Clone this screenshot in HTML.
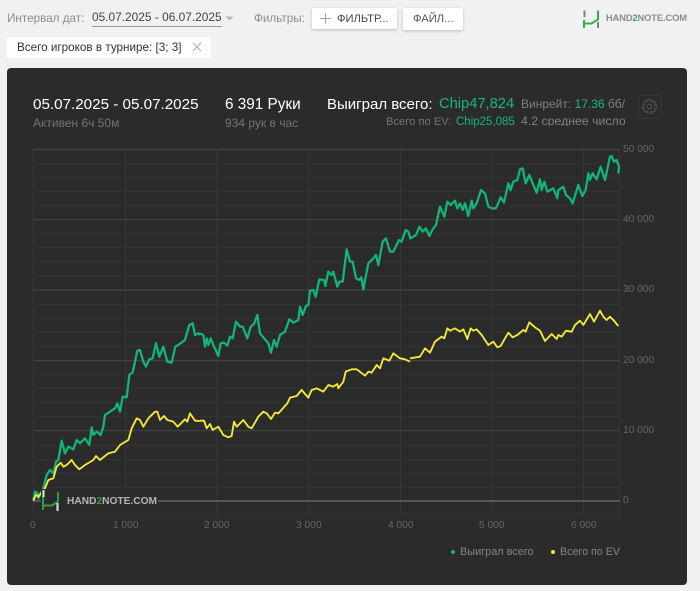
<!DOCTYPE html>
<html><head><meta charset="utf-8"><style>
html,body{margin:0;padding:0}
body{width:700px;height:591px;background:#f1f1f1;position:relative;overflow:hidden;font-family:"Liberation Sans",Arial,sans-serif}
.t{position:absolute;white-space:nowrap;line-height:1;transform-origin:0 50%}
.btn{position:absolute;background:#fff;border-radius:2px;box-shadow:0 1px 3px rgba(0,0,0,.22)}
#panel{position:absolute;left:7px;top:68px;width:680px;height:517px;background:#2b2b2b;border-radius:4px}
.ax{font-size:10.2px;color:#656565}
.g{color:#14b878}
</style></head><body>
<div class="t" style="left:7px;top:13px;font-size:11.7px;color:#8b8b8b">Интервал дат:</div>
<div class="t" style="left:92px;top:12px;font-size:11.9px;color:#444;border-bottom:1px solid #999;padding-bottom:2px">05.07.2025 - 06.07.2025</div>
<svg style="position:absolute;left:225px;top:16px" width="10" height="6"><path d="M0.5 0.5H8.5L4.5 4.500Z" fill="#b5b5b5"/></svg>
<div class="t" style="left:254px;top:13px;font-size:11.7px;color:#8b8b8b">Фильтры:</div>
<div class="btn" style="left:312px;top:8px;width:85px;height:21px"></div>
<svg style="position:absolute;left:320px;top:13px" width="11" height="11"><path d="M5.500 0V11M0 5.500H11" stroke="#aaa" stroke-width="1.200"/></svg>
<div class="t" style="left:337px;top:14px;font-size:11.200px;color:#444">ФИЛЬТР...</div>
<div class="btn" style="left:403px;top:8px;width:60px;height:22px"></div>
<div class="t" style="left:413px;top:14px;font-size:11.200px;color:#555">ФАЙЛ...</div>
<svg style="position:absolute;left:582px;top:9px" width="20" height="20"><path d="M2 11V19M2 14.500H9.500L16 10.500V1.500" fill="none" stroke="#2fb14b" stroke-width="2"/><path d="M2.500 1.500V8M16 13V19" stroke="#808080" stroke-width="2" fill="none"/></svg>
<div class="t" style="left:606px;top:14px;font-size:9.300px;font-weight:bold;color:#8b8b8b;letter-spacing:-.1px">HAND<span style="color:#2fb14b">2</span>NOTE.COM</div>

<div style="position:absolute;left:7px;top:37px;width:204px;height:21px;background:#fff;border-radius:2px"></div>
<div class="t" style="left:17px;top:42px;font-size:11.700px;color:#333">Всего игроков в турнире: [3; 3]</div>
<svg style="position:absolute;left:192px;top:42px" width="10" height="10"><path d="M1 1L9 9M9 1L1 9" stroke="#aaa" stroke-width="1"/></svg>

<div id="panel"></div>
<div class="t" style="left:33px;top:97px;font-size:15.200px;color:#fff">05.07.2025 - 05.07.2025</div>
<div class="t" style="left:33px;top:117px;font-size:12px;color:#747474">Активен 6ч 50м</div>
<div class="t" style="left:225px;top:97px;font-size:15.300px;color:#fff">6 391 Руки</div>
<div class="t" style="left:225px;top:117px;font-size:12px;color:#747474">934 рук в час</div>
<div class="t" style="left:327px;top:97px;font-size:15px;color:#fff">Выиграл всего:</div>
<div class="t g" style="left:439px;top:97px;font-size:14.700px">Chip47,824</div>
<div class="t" style="left:386px;top:117px;font-size:11.200px;color:#747474">Всего по EV:</div>
<div class="t g" style="left:456px;top:117px;font-size:11.500px">Chip25,085</div>
<div style="position:absolute;left:521px;top:90px;width:104px;height:36px;overflow:hidden">
<div class="t" style="left:0;top:8px;font-size:12px;color:#808080">Винрейт: <span class="g">17.36</span> бб/100</div>
<div class="t" style="left:0;top:25px;font-size:12.300px;color:#808080">4.2 среднее число столов</div>
</div>
<div style="position:absolute;left:638px;top:95px;width:22px;height:22px;border:1px solid #363636;border-radius:3px"></div>
<svg style="position:absolute;left:641px;top:98px" width="17" height="17" viewBox="0 0 17 17" fill="none" stroke="#4c4c4c" stroke-width="1.300"><circle cx="8.500" cy="8.500" r="2.300"/><path d="M7 1.500H10L10.500 3.500L12.300 2.800L14.500 5L13.500 6.700L15.500 7.200V10L13.500 10.500L14.300 12.300L12.200 14.400L10.500 13.500L10 15.500H7L6.500 13.500L4.800 14.400L2.700 12.300L3.500 10.500L1.500 10V7.200L3.500 6.700L2.500 5L4.700 2.800L6.500 3.500Z"/></svg>

<svg style="position:absolute;left:0;top:0;filter:blur(.3px)" width="700" height="591">
<g stroke="#323232" stroke-width="1" fill="none">
<path d="M33 163.500H620M33 177.500H620M33 191.500H620M33 205.500H620M33 233.500H620M33 247.500H620M33 261.500H620M33 275.500H620M33 304.500H620M33 318.500H620M33 332.500H620M33 346.500H620M33 374.500H620M33 388.500H620M33 402.500H620M33 416.500H620M33 445.500H620M33 459.500H620M33 473.500H620M33 487.500H620M33 515H620"/>
<path stroke="#363636" d="M33.500 149V515M125.500 149V515M217 149V515M308.500 149V515M400.500 149V515M492 149V515M583.500 149V515M619.500 149V515"/>
</g>
<g stroke="#434343" stroke-width="1.200" fill="none"><path d="M33 149.500H620M33 219.700H620M33 290H620M33 360.500H620M33 430.700H620"/></g>
<path d="M33 501H620" stroke="#666" stroke-width="1.600"/>

<g fill="none" stroke="#12b577" stroke-width="6.800" stroke-linejoin="round" transform="translate(30,310) scale(.33333)">
<polyline points="10,570 15,545 22,548 25,565 40,535 50,495 60,480 70,490 78,455 85,450 95,392 105,430 115,410 130,418 140,390 150,400 165,385 178,405 185,352 190,375 200,365 212,375 220,350 225,315 240,305 255,295 262,280 270,305 278,260 290,262 298,195 308,187 316,150 322,122 330,120 340,155 348,170 358,148 368,145 378,100 388,140 400,110 412,155 425,158 436,110 445,105 465,90 478,45 488,40 495,75 505,70 510,75"/>
</g>
<g fill="none" stroke="#12b577" stroke-width="6.800" stroke-linejoin="round" transform="translate(200,230) scale(.33333)">
<polyline points="0,310 10,315 15,350 20,325 25,345 32,325 40,345 55,378 62,340 72,338 82,347 90,320 98,325 108,275 120,290 128,290 142,325 152,290 162,282 172,255 180,310 190,322 205,340 213,368 222,330 230,350 240,315 255,305 268,268 280,278 295,270 300,230 308,255 318,228 325,225 330,182 340,180 347,200 358,148 372,150 376,168 385,125 395,135 400,125 412,170 418,155 428,155 440,58 450,95 458,95 468,145 478,150 484,142 490,178 505,100 520,85 528,75 535,105 548,35 558,25 570,65 580,65 597,30 605,35 617,0 625,5 632,28"/>
</g>
<g fill="none" stroke="#12b577" stroke-width="6.800" stroke-linejoin="round" transform="translate(410,140) scale(.33333)">
<polyline points="0,295 10,290 18,285 28,260 38,275 48,265 58,288 68,268 78,255 90,200 103,230 112,185 122,195 135,182 142,205 150,190 158,210 165,190 175,228 185,182 190,205 200,190 213,150 225,160 235,200 245,205 258,205 272,172 282,188 295,130 302,150 310,125 322,120 330,88 338,85 347,130 358,105 368,130 380,158 390,118 395,150 403,125 412,155 430,145 442,175 445,150 460,140 468,165 480,175 488,190 505,135 517,168 527,150 535,100 540,120 548,100 560,118 572,80 585,120 600,50 605,48 612,65 620,60 627,80 625,100"/>
</g>
<g fill="none" stroke="#f4ea3a" stroke-width="5.500" stroke-linejoin="round" transform="translate(30,310) scale(.33333)">
<polyline points="10,572 18,555 25,560 45,535 55,510 70,505 80,470 92,458 100,470 110,465 125,450 135,465 148,478 165,465 190,450 198,438 210,450 235,430 255,425 270,405 295,390 305,355 320,325 330,330 340,350 355,325 375,305 382,305 390,330 402,318 412,330 430,335 443,350 465,328 472,335 480,310 495,332 510,333"/>
</g>
<g fill="none" stroke="#f4ea3a" stroke-width="5.500" stroke-linejoin="round" transform="translate(200,230) scale(.33333)">
<polyline points="0,572 12,572 20,595 30,582 38,600 55,590 70,615 85,622 95,618 102,575 110,590 130,570 145,590 155,595 175,560 190,545 200,550 213,567 225,548 235,550 262,520 270,503 290,498 305,480 325,503 335,480 350,475 370,485 385,465 400,470 412,462 415,475 430,455 437,425 455,418 470,418 495,437 505,425 515,428 530,405 540,415 550,385 568,392 580,370 600,385 615,388 630,395"/>
</g>
<g fill="none" stroke="#f4ea3a" stroke-width="5.500" stroke-linejoin="round" transform="translate(410,140) scale(.33333)">
<polyline points="0,655 30,650 45,625 60,638 75,605 95,590 103,595 112,565 120,572 135,565 150,575 160,568 172,597 182,565 190,572 200,568 215,585 235,615 250,605 262,622 272,618 285,595 295,578 308,592 322,585 340,570 347,575 358,547 375,562 390,572 405,603 425,582 440,597 445,585 455,590 468,572 485,575 495,555 510,542 520,555 540,522 552,545 570,512 580,530 590,540 600,530 610,540 625,558"/>
</g>

<rect x="41" y="489" width="117" height="25" fill="#2b2b2b"/>
<path d="M43 496V510M43 505.500H52L58 501.500V492" fill="none" stroke="#2f9d45" stroke-width="2"/>
<path d="M43.500 490V497M57.500 503V511" stroke="#d8d8d8" stroke-width="2.200" fill="none"/>
</svg>
<div class="t" style="left:67px;top:497px;font-size:10.200px;font-weight:bold;color:#b5b5b5">HAND<span style="color:#2f9d45">2</span>NOTE.COM</div>

<div class="t ax" style="left:623px;top:145px">50 000</div>
<div class="t ax" style="left:623px;top:215px">40 000</div>
<div class="t ax" style="left:623px;top:285px">30 000</div>
<div class="t ax" style="left:623px;top:356px">20 000</div>
<div class="t ax" style="left:623px;top:426px">10 000</div>
<div class="t ax" style="left:623px;top:496px">0</div>
<div class="t ax" style="left:30px;top:521px">0</div>
<div class="t ax" style="left:113px;top:521px">1 000</div>
<div class="t ax" style="left:204px;top:521px">2 000</div>
<div class="t ax" style="left:296px;top:521px">3 000</div>
<div class="t ax" style="left:388px;top:521px">4 000</div>
<div class="t ax" style="left:479px;top:521px">5 000</div>
<div class="t ax" style="left:571px;top:521px">6 000</div>

<div style="position:absolute;left:451px;top:550px;width:4px;height:4px;border-radius:50%;background:#12b577"></div>
<div class="t" style="left:460px;top:547px;font-size:10.900px;color:#858585">Выиграл всего</div>
<div style="position:absolute;left:551px;top:550px;width:4px;height:4px;border-radius:50%;background:#f4ea3a"></div>
<div class="t" style="left:560px;top:547px;font-size:10.700px;color:#858585">Всего по EV</div>
</body></html>
